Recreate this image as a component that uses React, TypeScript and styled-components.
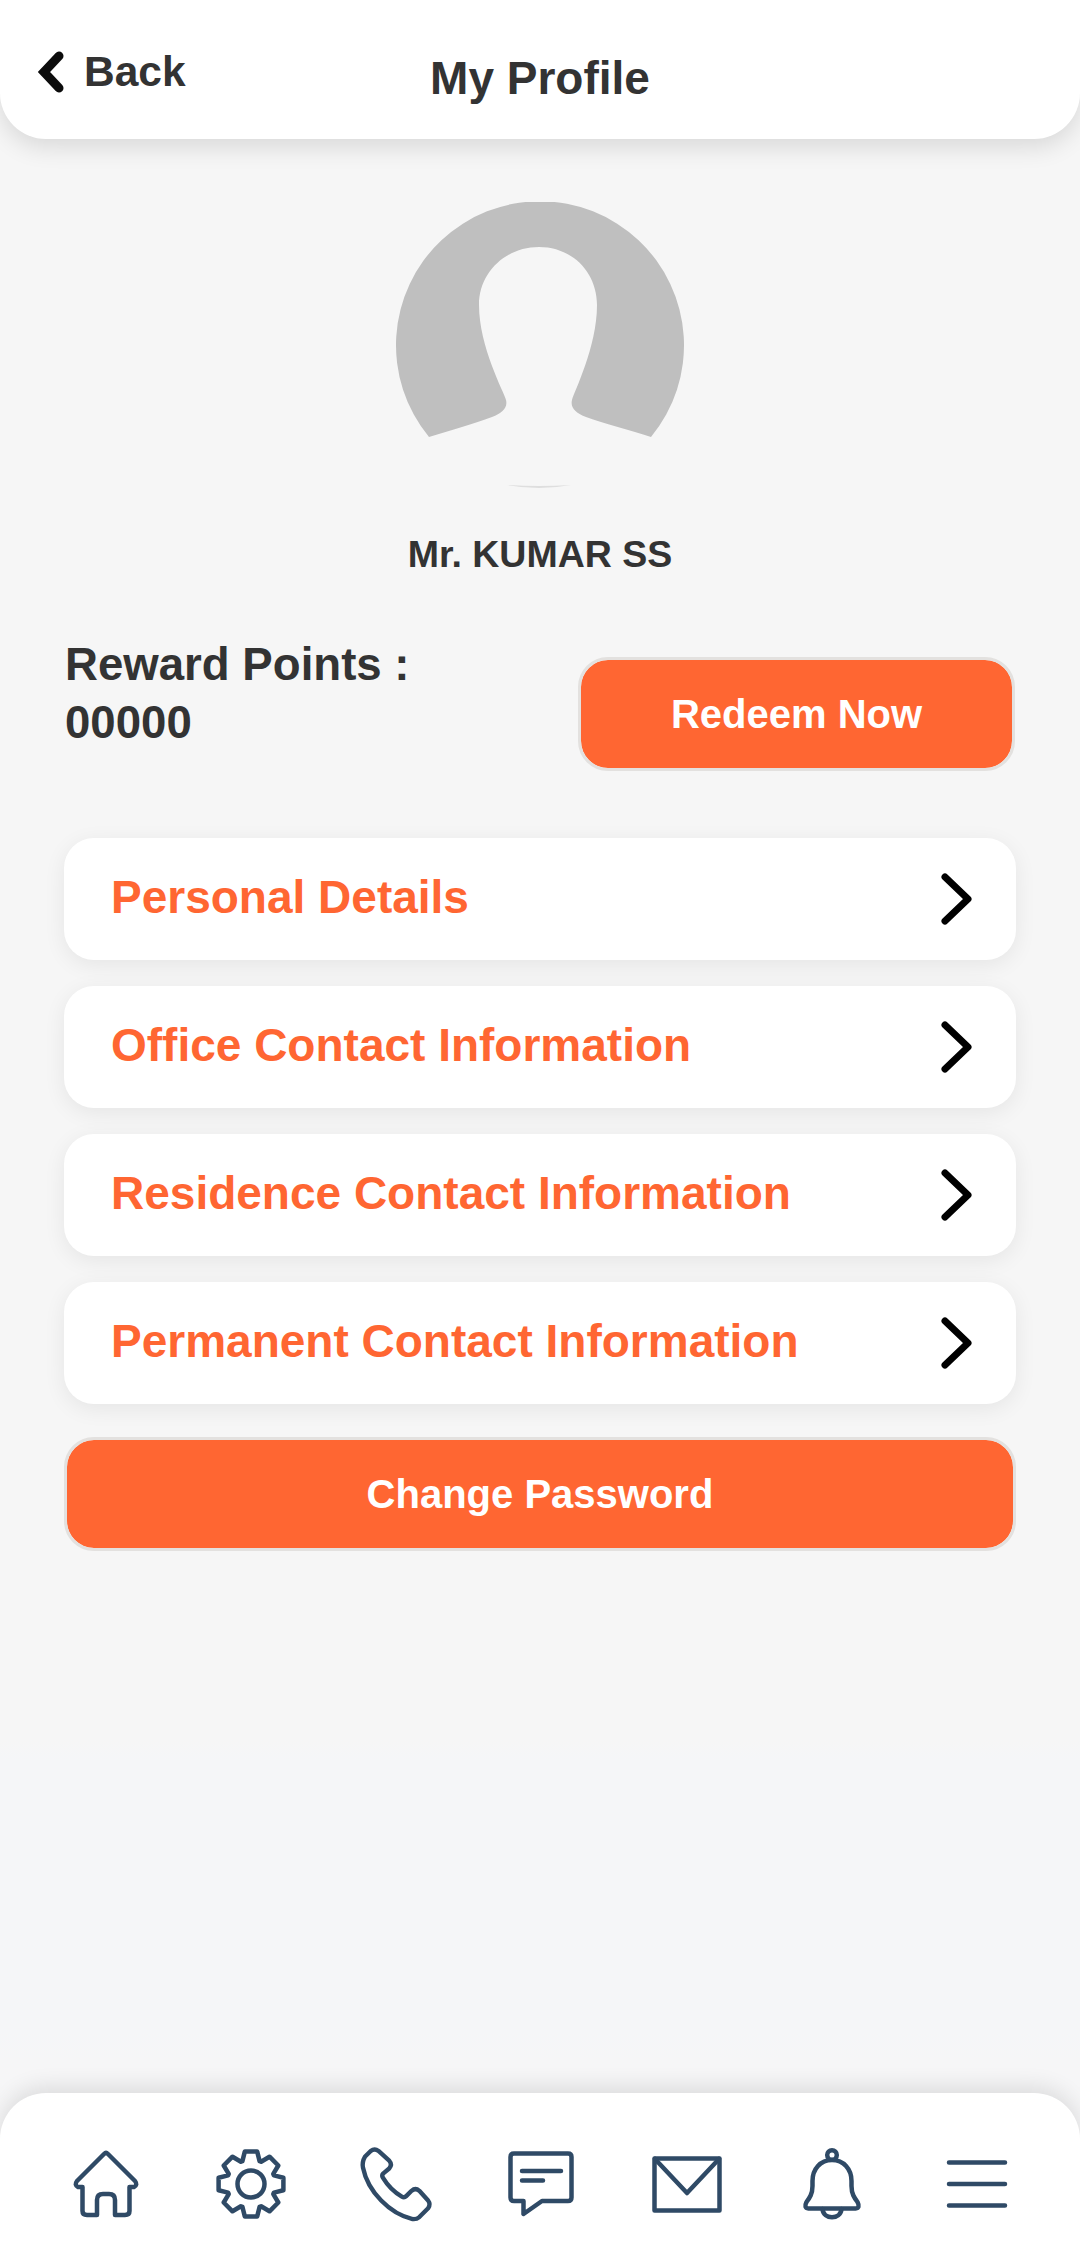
import styled, { createGlobalStyle } from 'styled-components'

const ORANGE = '#ff6632'
const INK = '#333333'
const NAVY = '#2f4a66'

const menuItems = [
  'Personal Details',
  'Office Contact Information',
  'Residence Contact Information',
  'Permanent Contact Information',
]

// eight-tooth cog outline, top tooth pointing up
const gearPoints = Array.from({ length: 8 }, (_, i) => {
  const a = (i * Math.PI) / 4 - Math.PI / 2
  return [
    [a - 0.36, 24.5],
    [a - 0.19, 33],
    [a + 0.19, 33],
    [a + 0.36, 24.5],
  ]
    .map(([t, r]) => `${(35 + r * Math.cos(t)).toFixed(1)},${(35 + r * Math.sin(t)).toFixed(1)}`)
    .join(' ')
}).join(' ')

export default function App() {
  return (
    <>
      <GlobalStyle />
      <Page>
        <Header>
          <BackLink>
            <svg width="30" height="42" viewBox="0 0 30 42" aria-hidden="true">
              <path d="M23 5 L8 21 L23 37" fill="none" stroke="#0c0c0c" strokeWidth="9" strokeLinecap="round" strokeLinejoin="miter" />
            </svg>
            Back
          </BackLink>
          <Title>My Profile</Title>
        </Header>

        <Main>
          <Avatar viewBox="0 0 288 288" aria-hidden="true">
            <path
              fill="#bfbfbf"
              d="M33 235 A144 144 0 1 1 255 235 C235 228 208 222 190 215 C180 211 174 206 176 198 C178 190 201 145 201 103 C201 70 176 45 143 45 C110 45 83 70 83 103 C83 145 108 190 110 198 C112 206 106 211 96 215 C78 222 55 228 33 235 Z"
            />
            <path fill="#dedede" d="M111 283 Q143 285 175 283 Q143 289 111 283 Z" />
          </Avatar>
          <Name>Mr. KUMAR SS</Name>

          <RewardRow>
            <RewardText>
              Reward Points :
              <br />
              00000
            </RewardText>
            <RedeemButton>Redeem Now</RedeemButton>
          </RewardRow>

          <MenuList>
            {menuItems.map((label) => (
              <MenuCard key={label}>
                <MenuLabel>{label}</MenuLabel>
                <svg width="32" height="52" viewBox="0 0 32 52" aria-hidden="true">
                  <path d="M4 4 L27 26 L4 48" fill="none" stroke="#000" strokeWidth="7" strokeLinecap="round" strokeLinejoin="round" />
                </svg>
              </MenuCard>
            ))}
          </MenuList>

          <PasswordButton>Change Password</PasswordButton>
        </Main>

        <BottomNav>
          <NavIcon width="66" height="68" viewBox="0 0 66 68">
            <path d="M31 4 L4 31 Q1 35 5 37 H9.500 V61 Q9.500 65 14 65 H24 V50 Q24 44 30 44 H36 Q42 44 42 50 V65 H52 Q56.500 65 56.500 61 V37 H61 Q65 35 62 31 L35 4 Q33 2 31 4 Z" />
          </NavIcon>
          <NavIcon width="70" height="70" viewBox="0 0 70 70">
            <polygon points={gearPoints} />
            <circle cx="35" cy="35" r="13.500" />
          </NavIcon>
          <NavIcon width="70" height="73" viewBox="0 0 72 75">
            <path d="M4 9 L10 3 Q14 0 18 3 L29 13 Q32.500 17 29 21 L23 26 Q21 28 22.500 30.500 C27 38 35 46 42 50 Q44.500 51.500 46.500 49.500 L52 44 Q56 40.500 60 44 L69 54 Q72 58 69 62 L60 71 Q57 73.500 53 73 C30 68 7 45 2 20 Q1 14 4 9 Z" />
          </NavIcon>
          <NavIcon width="66" height="66" viewBox="0 0 66 66">
            <path d="M6 2.500 H60 Q63.500 2.500 63.500 6 V46.500 Q63.500 50 60 50 H34 L15.500 63 V50 H6 Q2.500 50 2.500 46.500 V6 Q2.500 2.500 6 2.500 Z" />
            <path d="M14 20 H53 M14 29.500 H35" />
          </NavIcon>
          <NavIcon width="70" height="57" viewBox="0 0 70 57">
            <rect x="2.500" y="2.500" width="65" height="52" />
            <path d="M3 3 L35 37 L67 3" />
          </NavIcon>
          <NavIcon width="58" height="73" viewBox="0 0 58 73">
            <circle cx="29" cy="7" r="4.800" />
            <path d="M29 12 C17.500 12 9.500 21 9.500 33 V38 C9.500 46 6.500 50 3.500 54 Q0.500 60 5.500 60.500 H52.500 Q57.500 60 54.500 54 C51.500 50 48.500 46 48.500 38 V33 C48.500 21 40.500 12 29 12 Z" />
            <path d="M19.500 61 C20.500 72 37.500 72 38.500 61" />
          </NavIcon>
          <NavIcon width="62" height="50" viewBox="0 0 62 50">
            <path d="M3 3.500 H59 M3 25 H59 M3 46.500 H59" />
          </NavIcon>
        </BottomNav>
      </Page>
    </>
  )
}

const GlobalStyle = createGlobalStyle`
  html, body {
    margin: 0;
    padding: 0;
    background: #f6f6f6;
  }
  * {
    box-sizing: border-box;
  }
`

const Page = styled.div`
  width: 1080px;
  height: 2256px;
  display: flex;
  flex-direction: column;
  overflow: hidden;
  font-family: 'Liberation Sans', Arial, sans-serif;
  font-weight: 700;
  color: ${INK};
  background: linear-gradient(to bottom, #f6f6f6 0, #f6f6f6 1740px, #f5f6f8 1760px, #f5f6f8 2030px, #f6f6f7 2060px);
`

const Header = styled.header`
  position: relative;
  z-index: 1;
  flex: none;
  height: 139px;
  display: grid;
  grid-template-columns: 1fr auto 1fr;
  background: #fff;
  border-radius: 0 0 46px 46px;
  box-shadow: 0 8px 24px rgba(0, 0, 0, 0.12);
`

const BackLink = styled.div`
  display: flex;
  align-items: center;
  gap: 18px;
  height: 48px;
  margin: 48px 0 0 36px;
  font-size: 42.5px;
  color: ${INK};
`

const Title = styled.h1`
  margin: 50px 0 0;
  font-size: 46px;
  line-height: 56px;
  font-weight: 700;
`

const Main = styled.main`
  flex: 1;
  display: flex;
  flex-direction: column;
  padding: 63px 64px 0;
`

const Avatar = styled.svg`
  flex: none;
  align-self: center;
  width: 288px;
  height: 288px;
`

const Name = styled.div`
  margin-top: 42px;
  text-align: center;
  font-size: 37.5px;
  line-height: 44px;
`

const RewardRow = styled.section`
  display: flex;
  justify-content: space-between;
  align-items: flex-start;
  margin-top: 60px;
  padding: 0 1px;
`

const RewardText = styled.div`
  font-size: 45.6px;
  line-height: 58px;
`

const ActionButton = styled.button`
  display: block;
  height: 114px;
  padding: 0;
  border: 3px solid #e3e1df;
  border-radius: 30px;
  background: ${ORANGE};
  background-clip: padding-box;
  color: #fff;
  font-family: inherit;
  font-size: 40px;
  font-weight: 700;
`

const RedeemButton = styled(ActionButton)`
  width: 437px;
  margin-top: 21px;
`

const MenuList = styled.div`
  display: flex;
  flex-direction: column;
  gap: 26px;
  margin-top: 67px;
`

const MenuCard = styled.div`
  height: 122px;
  display: flex;
  align-items: center;
  justify-content: space-between;
  padding: 0 43px 0 47px;
  background: #fff;
  border-radius: 30px;
  box-shadow: 0 5px 22px rgba(0, 0, 0, 0.07);
`

const MenuLabel = styled.span`
  padding-bottom: 5px;
  font-size: 46px;
  color: ${ORANGE};
`

const PasswordButton = styled(ActionButton)`
  width: 100%;
  margin-top: 33px;
`

const BottomNav = styled.nav`
  position: relative;
  flex: none;
  height: 163px;
  display: grid;
  grid-template-columns: repeat(7, 1fr);
  align-items: center;
  justify-items: center;
  padding: 19px 30px 0 33px;
  background: #fff;
  border-radius: 46px 46px 0 0;
  box-shadow: 0 -6px 22px rgba(0, 0, 0, 0.11);
`

const NavIcon = styled.svg`
  fill: none;
  stroke: ${NAVY};
  stroke-width: 4.5;
  stroke-linecap: round;
  stroke-linejoin: round;
  overflow: visible;
`
